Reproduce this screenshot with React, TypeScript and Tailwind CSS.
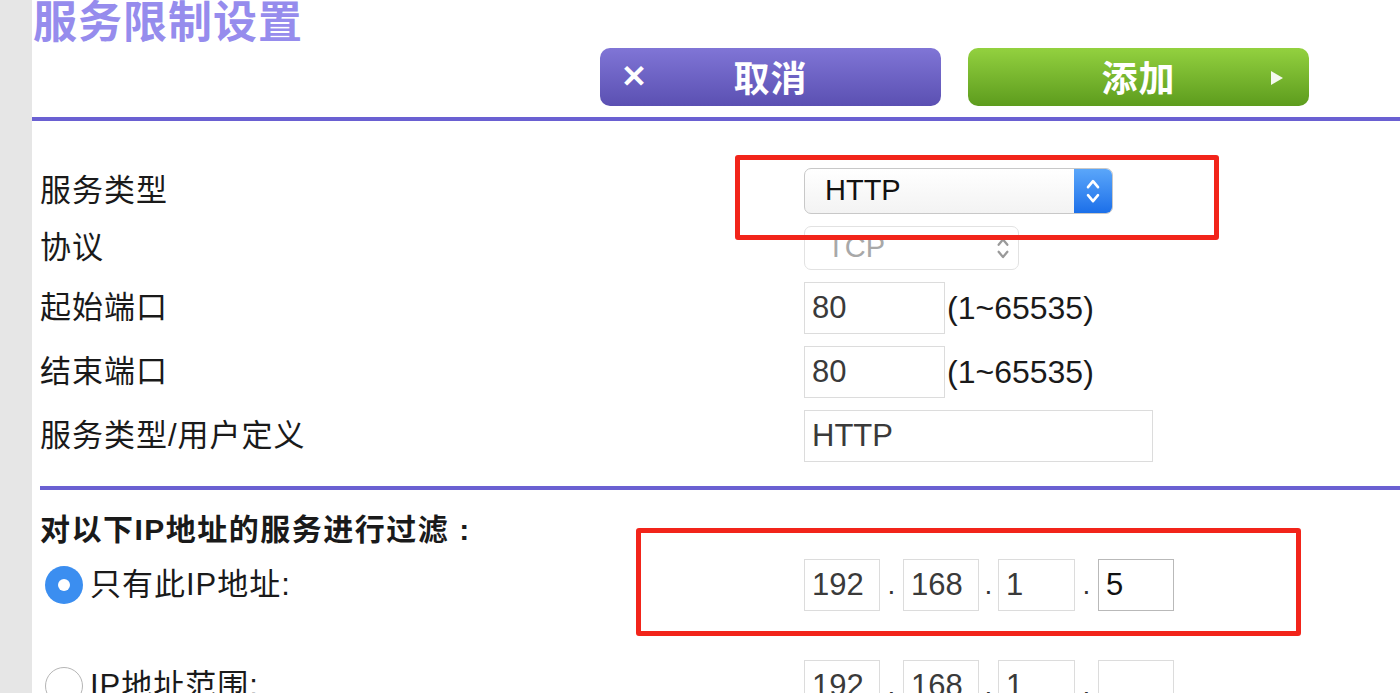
import React from "react";

const font = { fontFamily: '"Liberation Sans", "Noto Sans CJK SC", sans-serif' };

function Chevrons({ color, size = 16 }: { color: string; size?: number }) {
  return (
    <svg width={size} height={size * 1.9} viewBox="0 0 16 30" fill="none">
      <path d="M3 11 L8 5 L13 11" stroke={color} strokeWidth="2.6" strokeLinecap="round" strokeLinejoin="round" />
      <path d="M3 19 L8 25 L13 19" stroke={color} strokeWidth="2.6" strokeLinecap="round" strokeLinejoin="round" />
    </svg>
  );
}

function TextBox({ value, w, dark }: { value: string; w: string; dark?: boolean }) {
  return (
    <div
      className={`${w} h-[52px] shrink-0 border ${dark ? "border-[#b9b9b9]" : "border-[#dcdcdc]"} bg-white flex items-center pl-[7px] text-[31px] ${dark ? "text-[#111]" : "text-[#3a3a3a]"}`}
    >
      {value}
    </div>
  );
}

function Dot({ w }: { w: string }) {
  return (
    <div className={`${w} shrink-0 flex justify-center items-end h-[52px] pb-[12px] text-[28px] text-[#333] leading-none`}>.</div>
  );
}

function IpRow({ values, lastDark }: { values: string[]; lastDark?: boolean }) {
  return (
    <div className="flex items-center h-[52px]">
      <TextBox value={values[0]} w="w-[76px]" />
      <Dot w="w-[23px]" />
      <TextBox value={values[1]} w="w-[76px]" />
      <Dot w="w-[19px]" />
      <TextBox value={values[2]} w="w-[77px]" />
      <Dot w="w-[23px]" />
      <TextBox value={values[3]} w="w-[76px]" dark={lastDark} />
    </div>
  );
}

export default function App() {
  return (
    <div className="relative w-[1400px] h-[693px] overflow-hidden flex bg-white" style={font}>
      <div className="w-[32px] shrink-0 bg-[#e6e6e6]" />
      <div className="flex-1 min-w-0">
        <div className="h-[45px] pl-[1px] text-[44px] leading-[45px] font-bold tracking-[1px] text-[#968ced]">
          服务限制设置
        </div>
        <div className="flex pl-[568px] gap-[27px] mt-[3px]">
          <div className="w-[341px] h-[58px] shrink-0 rounded-[10px] bg-gradient-to-b from-[#8075d6] to-[#5b50b2] flex items-center relative">
            <span className="absolute left-[21px] top-[13px] text-white font-bold text-[31px] leading-none">✕</span>
            <span className="w-full text-center text-white font-bold text-[36px] leading-none tracking-[1px] mt-[5px]">取消</span>
          </div>
          <div className="w-[341px] h-[58px] shrink-0 rounded-[10px] bg-gradient-to-b from-[#93d13f] to-[#5d9c1d] flex items-center relative">
            <span className="w-full text-center text-white font-bold text-[36px] leading-none tracking-[1px] mt-[5px]">添加</span>
            <svg className="absolute left-[302px] top-[22px]" width="14" height="16" viewBox="0 0 14 16">
              <path d="M1 1 L13 8 L1 15 Z" fill="#f4f9ee" />
            </svg>
          </div>
        </div>
        <div className="mt-[11px] h-[4px] bg-[#6a60d2]" />

        <div className="pl-[8px] pt-[47px] flex flex-col gap-[12px] text-[#1a1a1a] text-[31px]">
          <div className="flex items-center h-[46px]">
            <div className="w-[764px] shrink-0 tracking-[1px]">服务类型</div>
            <div className="w-[309px] h-[46px] shrink-0 rounded-[7px] border border-[#c8c8c8] bg-gradient-to-b from-white to-[#f3f3f3] flex overflow-hidden">
              <div className="flex-1 flex items-center pl-[20px] text-[#111] text-[29px]">HTTP</div>
              <div className="w-[38px] h-full bg-gradient-to-b from-[#5aa6fa] to-[#1b6fe9] flex items-center justify-center">
                <Chevrons color="#ffffff" size={16} />
              </div>
            </div>
          </div>
          <div className="flex items-center h-[44px]">
            <div className="w-[764px] shrink-0 tracking-[1px]">协议</div>
            <div className="w-[215px] h-[44px] shrink-0 rounded-[7px] border border-[#e2e2e2] bg-white flex items-center">
              <div className="flex-1 pl-[22px] text-[#a8a8a8] text-[29px]">TCP</div>
              <div className="pr-[8px] flex items-center">
                <Chevrons color="#9a9a9a" size={14} />
              </div>
            </div>
          </div>
          <div className="flex items-center h-[52px]">
            <div className="w-[764px] shrink-0 tracking-[1px]">起始端口</div>
            <TextBox value="80" w="w-[141px]" />
            <span className="ml-[2px] text-[32px] text-[#1a1a1a]">(1~65535)</span>
          </div>
          <div className="flex items-center h-[52px]">
            <div className="w-[764px] shrink-0 tracking-[1px]">结束端口</div>
            <TextBox value="80" w="w-[141px]" />
            <span className="ml-[2px] text-[32px] text-[#1a1a1a]">(1~65535)</span>
          </div>
          <div className="flex items-center h-[52px]">
            <div className="w-[764px] shrink-0 tracking-[1px]">服务类型/用户定义</div>
            <TextBox value="HTTP" w="w-[349px]" />
          </div>
        </div>

        <div className="ml-[8px] mt-[24px] h-[4px] bg-[#6a60d2]" />

        <div className="pl-[8px] text-[#1a1a1a]">
          <div className="mt-[22px] h-[36px] leading-[36px] text-[30px] font-bold tracking-[1.5px]">对以下IP地址的服务进行过滤 :</div>
          <div className="mt-[11px] flex items-center h-[52px]">
            <div className="w-[764px] shrink-0 flex items-center">
              <div className="ml-[5px] w-[38px] h-[38px] rounded-full bg-[#3b8ef0] flex items-center justify-center">
                <div className="w-[12px] h-[12px] rounded-full bg-white" />
              </div>
              <span className="ml-[7px] text-[31px] tracking-[1px]">只有此IP地址:</span>
            </div>
            <IpRow values={["192", "168", "1", "5"]} lastDark />
          </div>
          <div className="mt-[49px] flex items-start h-[52px]">
            <div className="w-[764px] shrink-0 flex items-center h-[52px]">
              <div className="ml-[5px] w-[38px] h-[38px] rounded-full border border-[#b5b5b5] bg-white" />
              <span className="ml-[7px] text-[31px] tracking-[1px]">IP地址范围:</span>
            </div>
            <IpRow values={["192", "168", "1", ""]} />
          </div>
        </div>
      </div>

      <div className="absolute left-[735px] top-[155px] w-[484px] h-[85px] border-[5px] border-[#f2241a] rounded-[3px]" />
      <div className="absolute left-[636px] top-[528px] w-[665px] h-[108px] border-[5px] border-[#f2241a] rounded-[3px]" />
    </div>
  );
}
